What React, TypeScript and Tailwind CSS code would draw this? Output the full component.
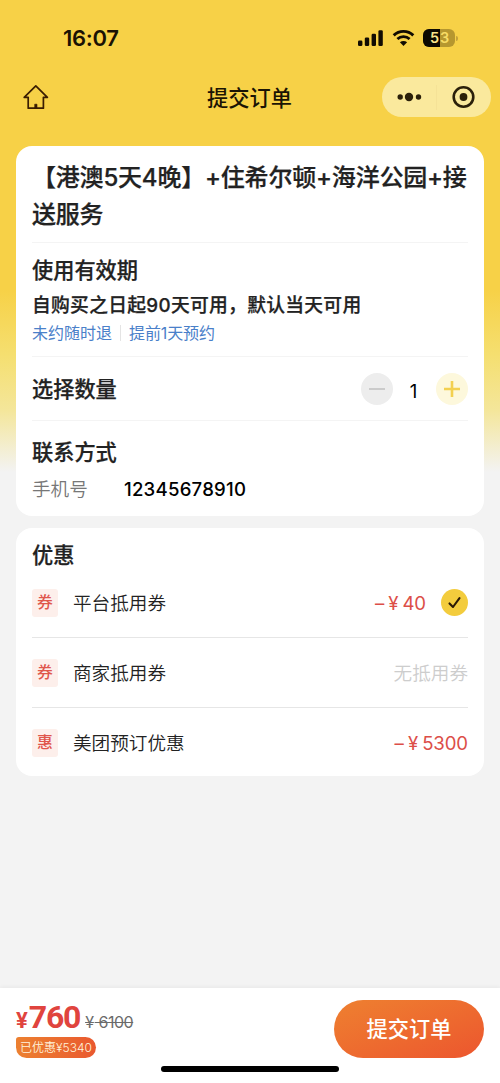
import type { ReactNode } from 'react';

function StatusBar() {
  return (
    <div className="flex h-[76px] items-center justify-between pr-[42px] pl-[63px]">
      <span className="text-[22px] leading-[30px] font-semibold tracking-[-0.3px] text-[#1a1204]">16:07</span>
      <div className="flex items-center">
        <svg className="h-[18px] w-[26px]" viewBox="0 0 26 18" fill="#120c02">
          <rect x="1" y="11.5" width="4.4" height="5.5" rx="1.3" />
          <rect x="7.8" y="8.5" width="4.4" height="8.5" rx="1.3" />
          <rect x="14.6" y="4.8" width="4.4" height="12.2" rx="1.3" />
          <rect x="21.4" y="1.2" width="4.4" height="15.8" rx="1.3" />
        </svg>
        <svg className="ml-[9px] h-[18px] w-[23px]" viewBox="0 0 23 18" fill="none" stroke="#120c02">
          <path d="M1.7 6.4C7.1 1 15.9 1 21.3 6.4" strokeWidth="2.9" />
          <path d="M5.4 10.1C8.8 6.9 14.2 6.9 17.6 10.1" strokeWidth="2.8" />
          <path d="M11.5 17L7.9 13.3C10 11.5 13 11.5 15.1 13.3Z" fill="#120c02" stroke="none" />
        </svg>
        <div className="ml-[8px] flex h-[18px] w-[32px] overflow-hidden rounded-[6px] bg-[#b6972f] text-[14.5px] leading-[18px] font-semibold">
          <span className="w-[17px] bg-[#0d0901] pr-px text-right text-[#fbe58b]">5</span>
          <span className="text-[#f8dc65]">3</span>
        </div>
        <div className="ml-px h-[5px] w-[2px] rounded-r-full bg-[#c4a23a]" />
      </div>
    </div>
  );
}

function NavBar() {
  return (
    <div className="grid h-[42px] grid-cols-[1fr_auto_1fr] items-center pr-[9px] pl-[22px]">
      <svg className="h-[28px] w-[28px]" viewBox="0 0 28 28" fill="none" stroke="#3a1d02" strokeWidth="1.7" strokeLinejoin="round">
        <path d="M13.8 2.8L2.2 14.3H6.2V25.2H21.4V14.3H25.4Z" />
        <path d="M12.7 21.2H15V25.2H12.7Z" fill="#3a1d02" strokeWidth="0.6" />
      </svg>
      <h1 className="mt-px ml-[-14px] text-[21.2px] leading-[30px] font-medium text-[#1b1404]">提交订单</h1>
      <div className="flex h-[40px] w-[109px] items-center justify-self-end rounded-full bg-[#fae99d]">
        <svg className="h-[40px] w-[54px]" viewBox="0 0 54 40" fill="#2b200a">
          <circle cx="18.2" cy="20" r="2.7" />
          <circle cx="27" cy="20" r="4.2" />
          <circle cx="36.5" cy="20" r="2.7" />
        </svg>
        <div className="h-[25px] w-px bg-[#f5e297]" />
        <svg className="h-[40px] w-[54px]" viewBox="0 0 54 40">
          <circle cx="26.5" cy="20" r="9.8" fill="none" stroke="#2b200a" strokeWidth="2.6" />
          <circle cx="26.5" cy="20" r="3.9" fill="#2b200a" />
        </svg>
      </div>
    </div>
  );
}

function Heading({ children }: { children: ReactNode }) {
  return <h2 className="text-[21.2px] leading-[30px] font-medium text-[#222] [-webkit-text-stroke:0.25px_#222]">{children}</h2>;
}

function OrderCard() {
  return (
    <section className="mt-[28px] h-[370px] rounded-[16px] bg-white px-[16px]">
      <div className="h-[97px] border-b border-[#f4f4f4] pt-[13px]">
        <p className="text-[24px] leading-[37px] font-medium tracking-[-0.2px] whitespace-nowrap text-[#222] [-webkit-text-stroke:0.25px_#222]">
          <span>【港澳5天4晚】</span>
          <span>+住希尔顿+海洋公园+接</span>
          <br />
          送服务
        </p>
      </div>
      <div className="h-[114px] border-b border-[#f4f4f4] pt-[12px]">
        <Heading>使用有效期</Heading>
        <p className="mt-[7px] text-[18.8px] leading-[28px] font-medium tracking-[0.28px] whitespace-nowrap text-[#222] [-webkit-text-stroke:0.25px_#222]">
          自购买之日起90天可用，默认当天可用
        </p>
        <div className="mt-px flex items-center text-[16px] leading-[24px] text-[#4a80c9]">
          <span>未约随时退</span>
          <i className="mr-[8px] ml-[8px] h-[16px] w-px bg-[#e4e4e4]" />
          <span className="tracking-[-0.1px]">提前1天预约</span>
        </div>
      </div>
      <div className="flex h-[64px] items-center justify-between border-b border-[#f4f4f4]">
        <Heading>选择数量</Heading>
        <div className="flex items-center">
          <button className="flex size-[32px] items-center justify-center rounded-full bg-[#ededed]" aria-label="减少">
            <span className="h-[2px] w-[16px] bg-[#cbcbcb]" />
          </button>
          <span className="w-[43px] pt-[5px] pr-[2px] text-center text-[18.6px] leading-[24px] text-black">1</span>
          <button className="flex size-[32px] items-center justify-center rounded-full bg-[#fdf8dc]" aria-label="增加">
            <svg className="size-[16px]" viewBox="0 0 16 16" stroke="#f3d050" strokeWidth="2.6">
              <path d="M0 8H16M8 0V16" />
            </svg>
          </button>
        </div>
      </div>
      <div className="pt-[16px]">
        <Heading>联系方式</Heading>
        <div className="mt-[8px] flex items-center text-[18.6px] leading-[28px]">
          <span className="w-[92px] font-[350] text-[#777]">手机号</span>
          <span className="font-[450] tracking-[0.22px] text-black">12345678910</span>
        </div>
      </div>
    </section>
  );
}

function DiscountRow({ tag, label, divider, children }: { tag: string; label: string; divider?: boolean; children: ReactNode }) {
  return (
    <div className={divider ? 'flex h-[70px] items-center border-b border-[#e6e6e6]' : 'flex h-[70px] items-center'}>
      <span className="flex h-[28px] w-[26px] items-center justify-center rounded-[3px] bg-[#fdefeb] text-[15.8px] leading-[26px] font-medium text-[#e0564b]">{tag}</span>
      <span className="ml-[15px] flex-1 text-[18.6px] leading-[28px] font-[350] text-[#222]">{label}</span>
      {children}
    </div>
  );
}

function Amount({ value }: { value: number }) {
  return (
    <span className="flex items-center text-[18.6px] leading-[28px] text-[#dc4e48]">
      <span className="mr-[4px]">–</span>
      <span className="mr-[4px]">¥</span>
      <span className="tracking-[-0.1px]">{value}</span>
    </span>
  );
}

function Discounts() {
  return (
    <section className="mt-[12px] h-[248px] rounded-[16px] bg-white px-[16px] pt-[12px]">
      <Heading>优惠</Heading>
      <div className="-mt-[2px]">
        <DiscountRow tag="券" label="平台抵用券" divider>
          <Amount value={40} />
          <span className="ml-[15px] flex size-[27px] items-center justify-center rounded-full bg-[#f3cc3d]">
            <svg className="size-[15px]" viewBox="0 0 15 15" fill="none" stroke="#2b1905" strokeWidth="2.1" strokeLinecap="round" strokeLinejoin="round">
              <path d="M2.5 8.4L6 12L12.5 3.2" />
            </svg>
          </span>
        </DiscountRow>
        <DiscountRow tag="券" label="商家抵用券" divider>
          <span className="text-[18.6px] leading-[28px] font-[350] text-[#cdcdcd]">无抵用券</span>
        </DiscountRow>
        <DiscountRow tag="惠" label="美团预订优惠">
          <Amount value={5300} />
        </DiscountRow>
      </div>
    </section>
  );
}

function PayBar() {
  return (
    <footer className="relative flex h-[95px] justify-between bg-white px-[16px] pt-[12px] shadow-[0_-1px_4px_rgba(0,0,0,0.05)]">
      <div>
        <div className="flex h-[34px] items-baseline text-[#e0443e]">
          <span className="font-[Roboto] text-[22px] leading-[34px] font-bold">¥</span>
          <span className="ml-px font-[Roboto] text-[32px] leading-[34px] font-bold tracking-[-1.2px]">760</span>
          <del className="ml-[2px] text-[16px] leading-[20px] tracking-[-0.5px] text-[#6b6b6b]">
            <span className="pr-px pl-[3px] line-through">¥</span> 6100
          </del>
        </div>
        <div className="mt-[3px] flex h-[21px] w-[80px] items-center justify-center rounded-[11px] rounded-tl-[3px] bg-linear-to-r from-[#ec8030] to-[#e9582f] text-[12px] leading-[20px] font-[350] whitespace-nowrap text-[#fff3dc]">
          已优惠¥5340
        </div>
      </div>
      <button className="h-[58px] w-[150px] rounded-full bg-linear-to-br from-[#ee8030] to-[#ec552e] text-[21.2px] leading-[58px] font-medium text-white">
        提交订单
      </button>
      <div className="absolute bottom-[11px] left-[161px] h-[6px] w-[178px] rounded-full bg-black" />
    </footer>
  );
}

export default function App() {
  return (
    <div className="flex h-[1083px] w-[500px] flex-col overflow-hidden bg-[#f3f3f3] bg-[linear-gradient(180deg,#f7d147_0px,#f7d147_290px,#f5df70_355px,#f4e69a_410px,#f3f3f3_472px)] font-['Inter','Noto_Sans_CJK_SC',sans-serif]">
      <StatusBar />
      <NavBar />
      <main className="flex-1 px-[16px]">
        <OrderCard />
        <Discounts />
      </main>
      <PayBar />
    </div>
  );
}
